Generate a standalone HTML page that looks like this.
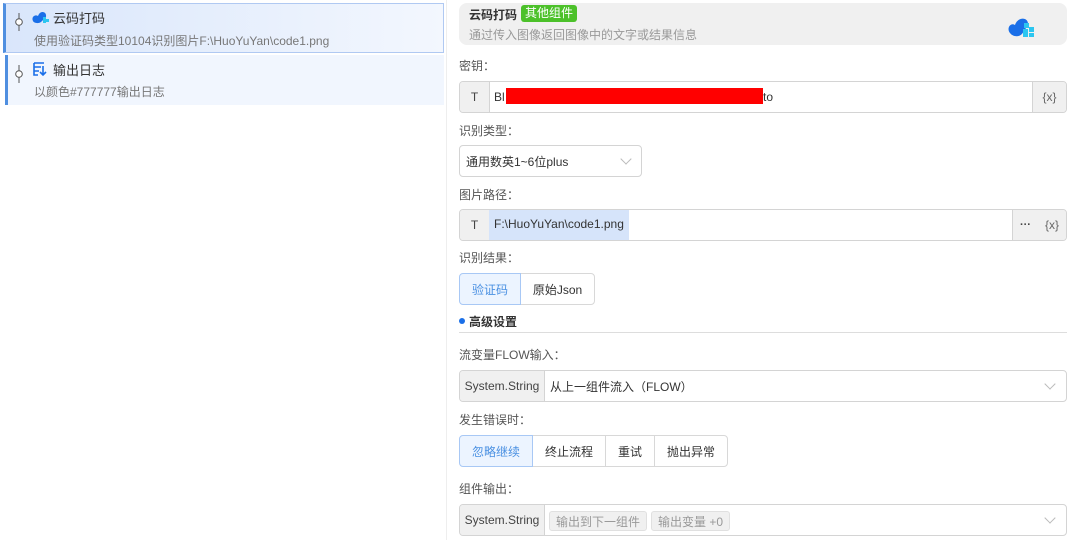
<!DOCTYPE html>
<html><head><meta charset="utf-8"><style>
*{box-sizing:border-box;margin:0;padding:0}
body{width:1071px;height:540px;background:#fff;font-family:"Liberation Sans","Noto Sans CJK SC",sans-serif;font-size:12px;color:#333;position:relative;overflow:hidden}
.a{position:absolute}
.lbl{position:absolute;left:459px;font-size:12px;color:#555}
.inp{position:absolute;left:459px;width:608px;height:32px;border:1px solid #d4d4d4;border-radius:4px;background:#fff;overflow:hidden}
.inp .pre{position:absolute;left:0;top:0;bottom:0;background:#f0f0f0;border-right:1px solid #d4d4d4;display:flex;align-items:center;justify-content:center;color:#444}
.inp .suf{position:absolute;right:0;top:0;bottom:0;background:#f0f0f0;border-left:1px solid #d4d4d4;display:flex;align-items:center;justify-content:center;color:#666}
.chev{position:absolute;width:8px;height:8px;border-right:1px solid #bbb;border-bottom:1px solid #bbb;transform:rotate(45deg)}
.btn{position:absolute;height:32px;border:1px solid #d8d8d8;display:flex;align-items:center;justify-content:center;color:#333;background:#fff}
.sel{background:#ecf4ff;border-color:#a8c8f5;color:#4a90e2;z-index:1}
.tag{position:absolute;top:6px;height:20px;background:#f0f0f0;border:1px solid #e0e0e0;border-radius:3px;color:#999;font-size:12px;display:flex;align-items:center;padding:0 6px}
</style></head><body>
<div class="a" style="left:3px;top:3px;width:441px;height:50px;background:linear-gradient(90deg,#d9e6fb,#f3f7fe);border:1px solid #b0c9f2;border-left:3px solid #4f8fe0"></div>
<div class="a" style="left:5px;top:55px;width:439px;height:50px;background:#f1f6fe;border-left:3px solid #4f8fe0"></div>
<svg class="a" style="left:14px;top:13px" width="10" height="18"><line x1="5" y1="0" x2="5" y2="18" stroke="#555"/><circle cx="5" cy="9" r="3.3" fill="#fff" stroke="#555"/></svg>
<svg class="a" style="left:14px;top:65px" width="10" height="18"><line x1="5" y1="0" x2="5" y2="18" stroke="#555"/><circle cx="5" cy="9" r="3.3" fill="#fff" stroke="#555"/></svg>
<svg class="a" style="left:31px;top:9px" width="19" height="15"><path d="M2 12 C0 8 4 5 7 7 C9 1 16 2 15 8 L10 13 C7 15 3 14 2 12Z" fill="#1a6fe8"/><rect x="12" y="8" width="3" height="3" fill="#2cc6f0"/><rect x="15" y="10" width="3" height="3" fill="#2cc6f0"/><rect x="12" y="11" width="3" height="3" fill="#2cc6f0"/></svg>
<div class="a" style="left:53px;top:8px;font-size:13px;color:#333">云码打码</div>
<div class="a" style="left:34px;top:32px;color:#777">使用验证码类型10104识别图片F:\HuoYuYan\code1.png</div>
<svg class="a" style="left:32px;top:61px" width="16" height="16"><path d="M2 2H12M2 2V14H6M2 6H9M2 10H7M11 5V14M14 11L11 14L8 11" stroke="#1a6fe8" stroke-width="1.6" fill="none"/></svg>
<div class="a" style="left:53px;top:60px;font-size:13px;color:#333">输出日志</div>
<div class="a" style="left:34px;top:83px;color:#777">以颜色#777777输出日志</div>
<div class="a" style="left:446px;top:0;width:1px;height:540px;background:#eee"></div>
<div class="a" style="left:459px;top:3px;width:608px;height:42px;background:#f0f0f0;border-radius:8px"></div>
<div class="a" style="left:469px;top:6px;font-size:12px;font-weight:bold;color:#333">云码打码</div>
<div class="a" style="left:521px;top:5px;width:56px;height:17px;background:#4cc12a;border-radius:3px;color:#fff;font-size:12px;text-align:center;line-height:17px">其他组件</div>
<div class="a" style="left:469px;top:26px;color:#999">通过传入图像返回图像中的文字或结果信息</div>
<svg class="a" style="left:1006px;top:14px" width="32" height="24"><path d="M4 19 C0 14 5 8 9 11 C12 2 23 3 22 11 L16 20 C12 24 6 22 4 19Z" fill="#1a6fe8"/><g fill="#2cc6f0"><rect x="18" y="9" width="5" height="5"/><rect x="23" y="13" width="5" height="5"/><rect x="17" y="15" width="5" height="5"/><rect x="23" y="19" width="5" height="4"/><rect x="17" y="20" width="5" height="3"/></g></svg>
<div class="lbl" style="top:57px">密钥：</div>
<div class="inp" style="top:81px"><div class="pre" style="width:30px">T</div>
<div class="a" style="left:34px;top:8px;color:#333">Bl</div><div class="a" style="left:46px;top:6px;width:257px;height:16px;background:#f00"></div><div class="a" style="left:303px;top:8px;color:#333">to</div>
<div class="suf" style="width:34px">{x}</div></div>
<div class="lbl" style="top:122px">识别类型：</div>
<div class="inp" style="top:145px;width:183px"><div class="a" style="left:6px;top:7px;color:#333">通用数英1~6位plus</div><div class="chev" style="left:162px;top:9px"></div></div>
<div class="lbl" style="top:186px">图片路径：</div>
<div class="inp" style="top:209px"><div class="pre" style="width:30px">T</div>
<div class="a" style="left:29px;top:0;width:140px;height:30px;background:#d6e4fa"></div><div class="a" style="left:34px;top:7px;color:#333">F:\HuoYuYan\code1.png</div>
<div class="suf" style="width:54px;justify-content:space-around">
<b style="font-size:11px;color:#444">···</b><span>{x}</span></div></div>
<div class="lbl" style="top:249px">识别结果：</div>
<div class="btn sel" style="left:459px;top:273px;width:62px;border-radius:4px 0 0 4px">验证码</div>
<div class="btn" style="left:520px;top:273px;width:75px;border-radius:0 4px 4px 0">原始Json</div>
<div class="a" style="left:459px;top:318px;width:6px;height:6px;border-radius:50%;background:#1a6fe8"></div>
<div class="a" style="left:469px;top:313px;font-weight:bold;color:#333">高级设置</div>
<div class="a" style="left:459px;top:332px;width:608px;height:1px;background:#ddd"></div>
<div class="lbl" style="top:346px">流变量FLOW输入：</div>
<div class="inp" style="top:370px"><div class="pre" style="width:85px">System.String</div><div class="a" style="left:90px;top:7px;color:#333">从上一组件流入（FLOW）</div><div class="chev" style="left:586px;top:9px"></div></div>
<div class="lbl" style="top:411px">发生错误时：</div>
<div class="btn sel" style="left:459px;top:435px;width:74px;border-radius:4px 0 0 4px">忽略继续</div>
<div class="btn" style="left:532px;top:435px;width:74px">终止流程</div>
<div class="btn" style="left:605px;top:435px;width:50px">重试</div>
<div class="btn" style="left:654px;top:435px;width:74px;border-radius:0 4px 4px 0">抛出异常</div>
<div class="lbl" style="top:480px">组件输出：</div>
<div class="inp" style="top:504px"><div class="pre" style="width:85px">System.String</div>
<div class="tag" style="left:89px">输出到下一组件</div><div class="tag" style="left:191px">输出变量 +0</div>
<div class="chev" style="left:586px;top:9px"></div></div>
</body></html>
